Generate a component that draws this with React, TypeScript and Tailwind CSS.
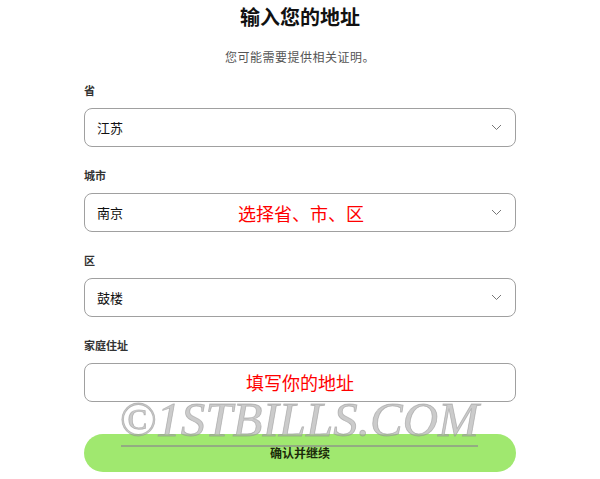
import React from "react";

const cjk = { fontFamily: '"Noto Sans CJK SC", "Noto Sans", sans-serif' };

function Chevron() {
  return (
    <svg width="11" height="7" viewBox="0 0 11 7" className="shrink-0">
      <path d="M1 1 L5.5 5.5 L10 1" fill="none" stroke="#777" strokeWidth="1" />
    </svg>
  );
}

function SelectField({ label, value, note }: { label: string; value: string; note?: string }) {
  return (
    <div className="flex flex-col">
      <div className="h-[16px] leading-[16px] text-[11px] font-bold text-[#333]">{label}</div>
      <div className="relative mt-[10px] h-[39px] rounded-[8px] border border-[#a0a0a0] flex items-center pl-[12px] pr-[13px]">
        <span className="text-[13px] text-[#111] flex-1">{value}</span>
        {note && (
          <span className="absolute left-[153px] top-[8px] text-[18px] leading-[22px] text-[#ff0000]">{note}</span>
        )}
        <Chevron />
      </div>
    </div>
  );
}

export default function App() {
  return (
    <div className="relative w-[600px] h-[479px] bg-white overflow-hidden" style={cjk}>
      <div className="flex flex-col px-[84px] pt-[3px] w-[600px]">
        <h1 className="h-[28px] leading-[28px] text-[20px] font-bold text-center text-[#111]">输入您的地址</h1>
        <p className="mt-[17px] h-[18px] leading-[18px] text-[12px] text-center text-[#555] tracking-[0.5px]">您可能需要提供相关证明。</p>
        <div className="mt-[16px] flex flex-col gap-[20px]">
          <SelectField label="省" value="江苏" />
          <SelectField label="城市" value="南京" note="选择省、市、区" />
          <SelectField label="区" value="鼓楼" />
          <div className="flex flex-col">
            <div className="h-[16px] leading-[16px] text-[11px] font-bold text-[#333]">家庭住址</div>
            <div className="mt-[10px] h-[39px] rounded-[8px] border border-[#a0a0a0] flex items-center justify-center">
              <span className="text-[18px] text-[#ff0000]">填写你的地址</span>
            </div>
          </div>
        </div>
        <button className="mt-[32px] h-[38px] rounded-full bg-[#a0e86f] text-[12px] font-bold text-[#1a2a0a]">确认并继续</button>
      </div>
      <div className="absolute left-[119px] top-[395px] flex flex-col items-start pointer-events-none">
        <span
          className="text-[49px] leading-[50px] italic text-[rgba(175,175,175,0.65)]"
          style={{ fontFamily: '"Liberation Serif", serif', WebkitTextStroke: "0.8px rgba(140,140,140,0.5)" }}
        >
          ©1STBILLS.COM
        </span>
        <div className="ml-[2px] h-[2px] w-[357px] bg-[rgba(140,140,140,0.65)]" />
      </div>
    </div>
  );
}
